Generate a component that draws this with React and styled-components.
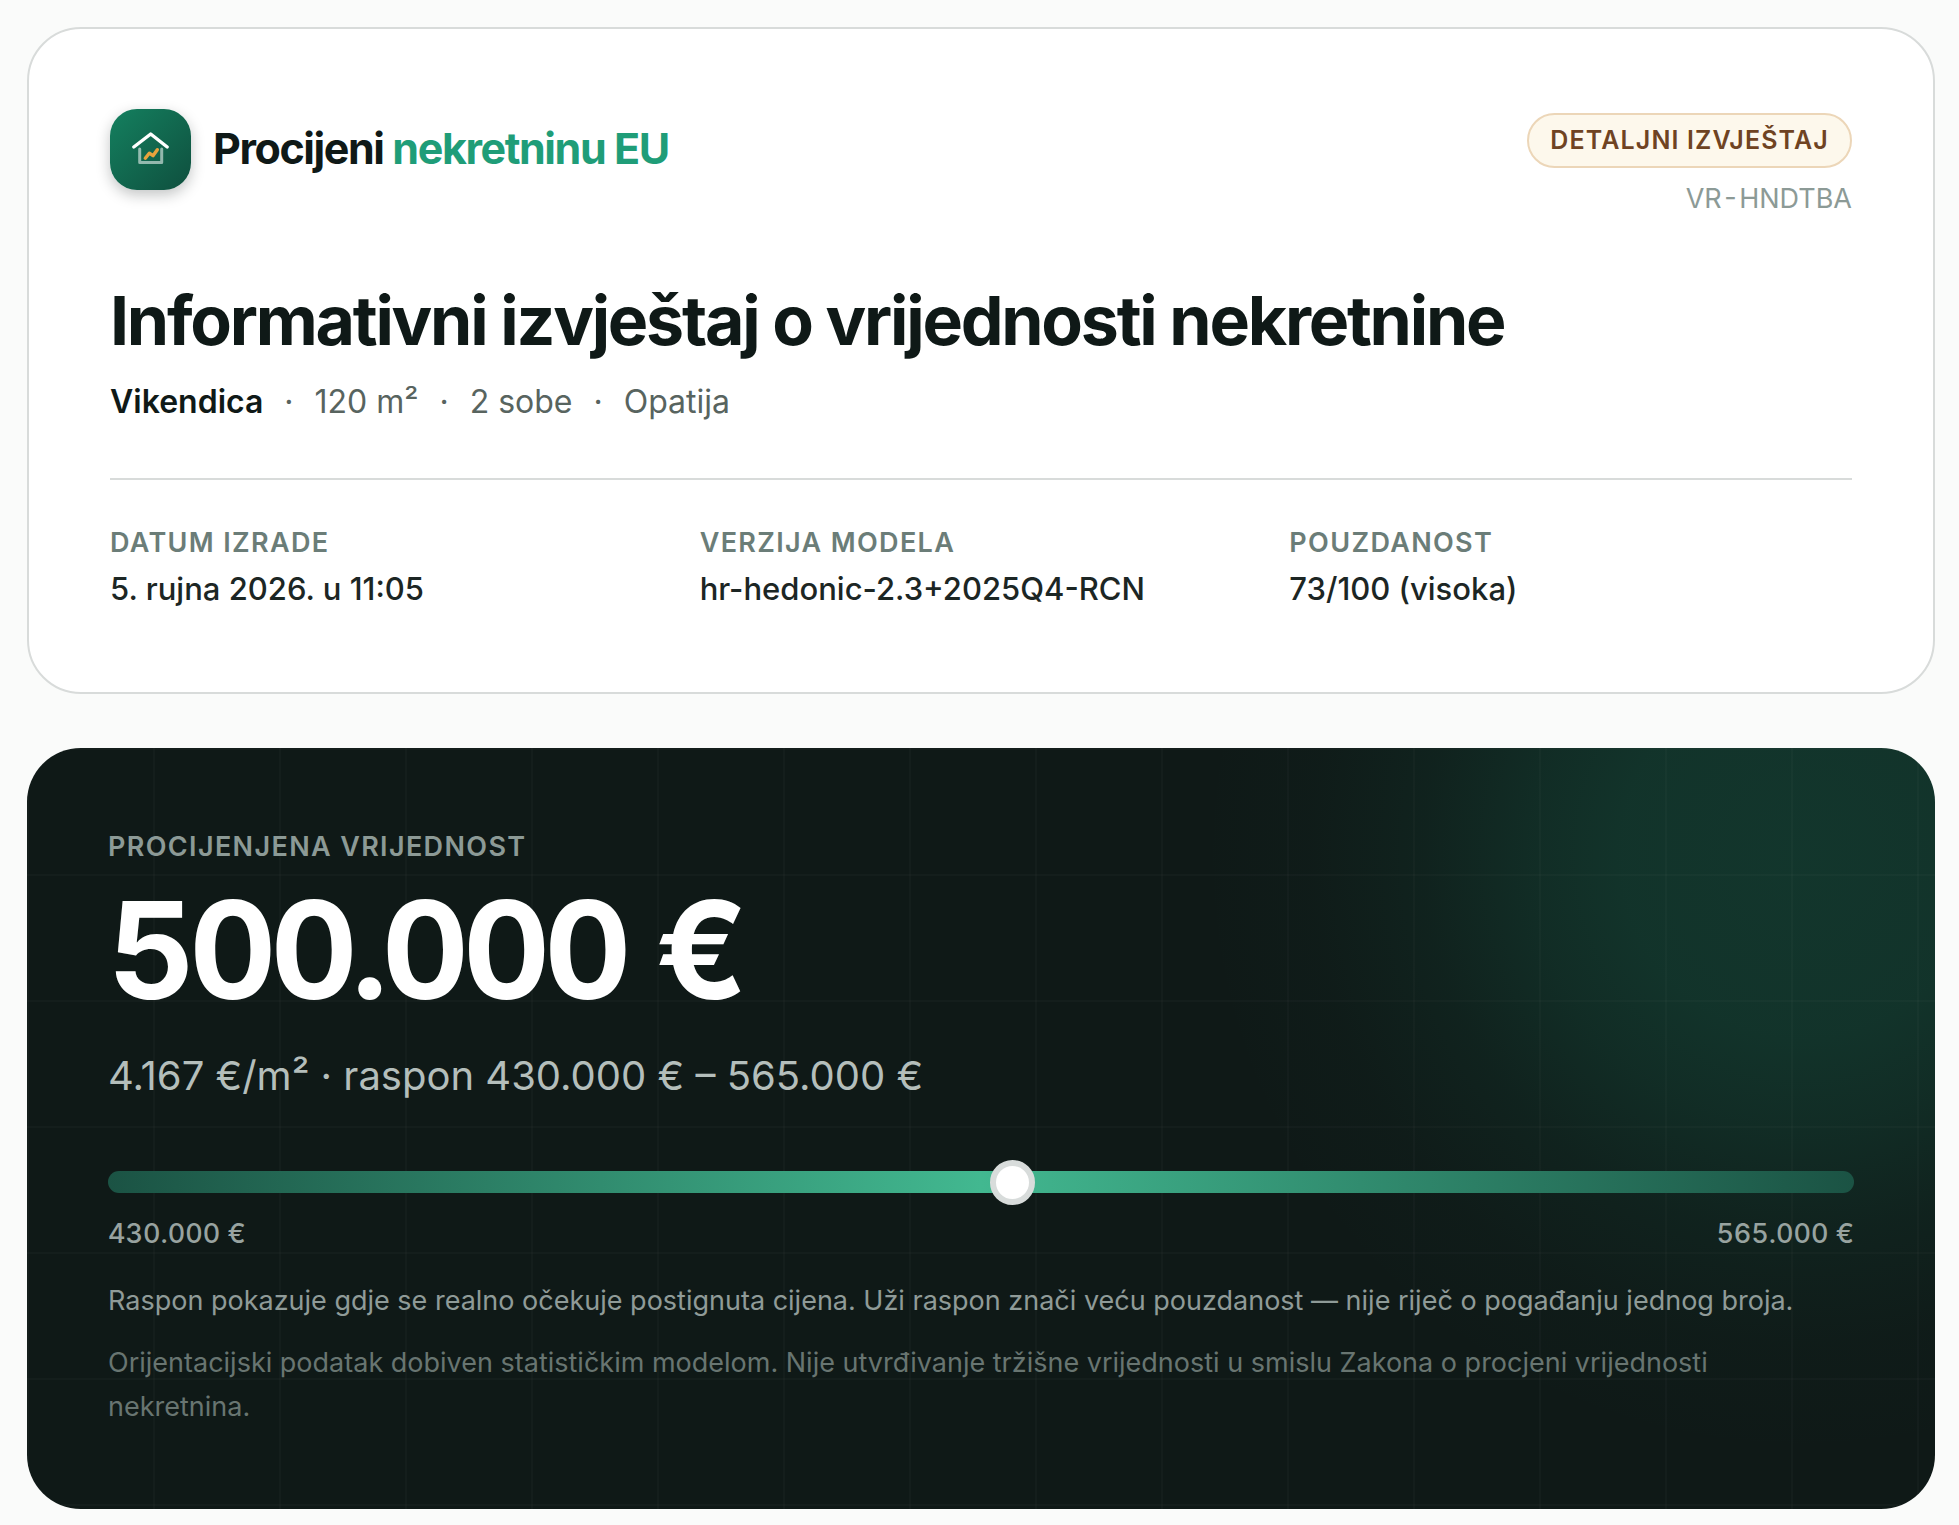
import React from 'react';
import styled, { createGlobalStyle } from 'styled-components';

const colors = {
  page: '#fafbfa',
  white: '#ffffff',
  ink: '#0f1917',
  body: '#1c2624',
  muted: '#58645f',
  label: '#6b7d78',
  faint: '#8c9a96',
  line: '#d8dbda',
  green: '#1f9d78',
};

const GlobalStyle = createGlobalStyle`
  * {
    box-sizing: border-box;
  }
  body {
    margin: 0;
    background-color: ${colors.page};
    color: ${colors.ink};
    font-family: Inter, 'Liberation Sans', sans-serif;
  }
  h1, p, dl, dt, dd {
    margin: 0;
    padding: 0;
  }
`;

const Page = styled.main`
  display: flex;
  flex-direction: column;
  gap: 54px;
  padding: 27px 24px 16px 27px;
`;

const ReportCard = styled.section`
  padding: 80px 81px 81px;
  background-color: ${colors.white};
  border: 2px solid ${colors.line};
  border-radius: 54px;
`;

const Header = styled.header`
  display: flex;
  justify-content: space-between;
  align-items: flex-start;
  margin-bottom: 61px;
`;

const Brand = styled.div`
  display: flex;
  align-items: center;
  gap: 22px;
`;

const BrandIcon = styled.span`
  display: flex;
  justify-content: center;
  align-items: center;
  width: 81px;
  height: 81px;
  border-radius: 27px;
  background: linear-gradient(135deg, #14805f, #0f4f3e);
  box-shadow: 0 5px 14px rgba(15, 25, 23, 0.25);
`;

const BrandName = styled.span`
  padding-bottom: 3px;
  font-size: 43px;
  line-height: 44px;
  font-weight: 700;
  letter-spacing: -0.033em;

  span {
    color: ${colors.green};
  }
`;

const HeaderSide = styled.div`
  display: flex;
  flex-direction: column;
  align-items: flex-end;
  gap: 13px;
  padding-top: 4px;
`;

const Badge = styled.span`
  padding: 8px 21px;
  border: 2px solid #ecd6b8;
  border-radius: 28px;
  background-color: #fdf8ec;
  color: #6f4322;
  font-size: 25px;
  line-height: 35px;
  font-weight: 600;
  letter-spacing: 0.045em;
  text-transform: uppercase;
`;

const ReportCode = styled.span`
  color: ${colors.faint};
  font-size: 27px;
  line-height: 36px;
  font-variant-numeric: tabular-nums;
`;

const Title = styled.h1`
  font-size: 68px;
  line-height: 84px;
  font-weight: 700;
  letter-spacing: -0.033em;
`;

const Summary = styled.p`
  display: flex;
  flex-wrap: wrap;
  gap: 21px;
  margin-top: 16px;
  color: ${colors.muted};
  font-size: 32px;
  line-height: 48px;

  strong {
    color: ${colors.ink};
    font-weight: 600;
  }
`;

const Details = styled.dl`
  display: grid;
  grid-template-columns: repeat(3, 1fr);
  gap: 27px;
  margin-top: 52px;
  padding-top: 45px;
  border-top: 2px solid ${colors.line};

  dt {
    margin-bottom: 5px;
    color: ${colors.label};
    font-size: 27px;
    line-height: 36px;
    font-weight: 600;
    letter-spacing: 0.05em;
    text-transform: uppercase;
  }
  dd {
    color: ${colors.body};
    font-size: 31px;
    line-height: 45px;
    font-weight: 500;
  }
`;

const ValueCard = styled.section`
  padding: 81px 81px 80px;
  border-radius: 54px;
  background-color: ${colors.ink};
  background-image: linear-gradient(rgba(255, 255, 255, 0.02) 2px, transparent 2px),
    linear-gradient(90deg, rgba(255, 255, 255, 0.02) 2px, transparent 2px),
    radial-gradient(
      600px 600px at 93% 14%,
      rgba(31, 157, 120, 0.22),
      rgba(31, 157, 120, 0.2) 30%,
      rgba(31, 157, 120, 0.15) 45%,
      rgba(31, 157, 120, 0.07) 63%,
      rgba(31, 157, 120, 0.02) 82%,
      transparent
    );
  background-size: 126px 126px, 126px 126px, auto;
`;

const ValueLabel = styled.p`
  color: ${colors.faint};
  font-size: 27px;
  line-height: 36px;
  font-weight: 600;
  letter-spacing: 0.05em;
  text-transform: uppercase;
`;

const Value = styled.p`
  margin-top: 18px;
  color: ${colors.white};
  font-size: 135px;
  line-height: 135px;
  font-weight: 700;
  font-variant-numeric: tabular-nums;
  letter-spacing: -0.045em;
`;

const ValueDetails = styled.p`
  margin-top: 28px;
  color: #b4bebb;
  font-size: 40px;
  line-height: 60px;
`;

const RangeSlider = styled.input`
  display: block;
  appearance: none;
  width: 100%;
  height: 22px;
  margin: 65px 0 23px;
  border-radius: 11px;
  background: linear-gradient(90deg, #1b5344, #42b890 50%, #1b5344);

  &::-webkit-slider-thumb {
    appearance: none;
    width: 45px;
    height: 45px;
    border: 6px solid #d8dcdb;
    border-radius: 50%;
    background-color: ${colors.white};
  }
`;

const RangeEnds = styled.div`
  display: flex;
  justify-content: space-between;
  color: #98a3a0;
  font-size: 27px;
  line-height: 36px;
  font-weight: 500;
  font-variant-numeric: tabular-nums;
`;

const Note = styled.p`
  margin-top: ${({ $small }) => ($small ? '18px' : '27px')};
  color: ${({ $small }) => ($small ? '#687571' : '#8f9b98')};
  font-size: 27px;
  line-height: 44px;
`;

const details = [
  { label: 'Datum izrade', value: '5. rujna 2026. u 11:05' },
  { label: 'Verzija modela', value: 'hr-hedonic-2.3+2025Q4-RCN' },
  { label: 'Pouzdanost', value: '73/100 (visoka)' },
];

const HouseIcon = () => (
  <svg width="41" height="41" viewBox="0 0 41 41" fill="none" strokeLinecap="round" strokeLinejoin="round" aria-hidden="true">
    <path d="M9.700 20v13.500h22V20" stroke="#ffffff" strokeOpacity="0.55" strokeWidth="3" />
    <path d="M3.800 18 20.700 5l16.500 13" stroke="#ffffff" strokeWidth="3.400" />
    <path d="M15.300 29.200l4-5 3.700 2.500 4.300-6" stroke="#e8a33d" strokeWidth="3.400" />
  </svg>
);

const App = () => (
  <>
    <GlobalStyle />
    <Page>
      <ReportCard>
        <Header>
          <Brand>
            <BrandIcon>
              <HouseIcon />
            </BrandIcon>
            <BrandName>
              Procijeni <span>nekretninu EU</span>
            </BrandName>
          </Brand>
          <HeaderSide>
            <Badge>Detaljni izvještaj</Badge>
            <ReportCode>VR-HNDTBA</ReportCode>
          </HeaderSide>
        </Header>
        <Title>Informativni izvještaj o vrijednosti nekretnine</Title>
        <Summary>
          <strong>Vikendica</strong>
          <span>·</span>
          <span>120 m²</span>
          <span>·</span>
          <span>2 sobe</span>
          <span>·</span>
          <span>Opatija</span>
        </Summary>
        <Details>
          {details.map(({ label, value }) => (
            <div key={label}>
              <dt>{label}</dt>
              <dd>{value}</dd>
            </div>
          ))}
        </Details>
      </ReportCard>
      <ValueCard>
        <ValueLabel>Procijenjena vrijednost</ValueLabel>
        <Value>500.000 €</Value>
        <ValueDetails id="value-range">4.167 €/m² · raspon 430.000 € – 565.000 €</ValueDetails>
        <RangeSlider type="range" min="430000" max="565000" step="5000" defaultValue="500000" aria-labelledby="value-range" />
        <RangeEnds>
          <span>430.000 €</span>
          <span>565.000 €</span>
        </RangeEnds>
        <Note>Raspon pokazuje gdje se realno očekuje postignuta cijena. Uži raspon znači veću pouzdanost — nije riječ o pogađanju jednog broja.</Note>
        <Note $small>
          Orijentacijski podatak dobiven statističkim modelom. Nije utvrđivanje tržišne vrijednosti u smislu Zakona o procjeni vrijednosti
          nekretnina.
        </Note>
      </ValueCard>
    </Page>
  </>
);

export default App;
